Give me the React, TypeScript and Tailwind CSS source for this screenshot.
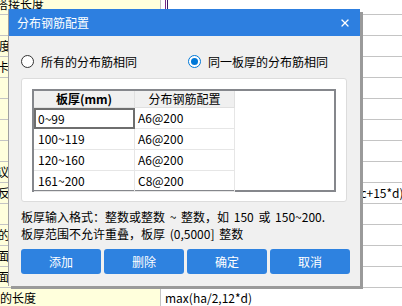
import { X } from "lucide-react"

const left = [
  { t: "搭接长度", ml: "-ml-[4px]" },
  { t: "", ml: "" },
  { t: "度量长", ml: "-ml-[1px]" },
  { t: "卡长度", ml: "-ml-[3px]" },
  { t: "", ml: "" },
  { t: "", ml: "" },
  { t: "", ml: "" },
  { t: "", ml: "" },
  { t: "议长度", ml: "-ml-[3px]" },
  { t: "反弯长", ml: "-ml-[2px]" },
  { t: "", ml: "" },
  { t: "的长度", ml: "-ml-[2px]" },
  { t: "面伸长", ml: "-ml-[3px]" },
  { t: "面伸长", ml: "-ml-[3px]" },
  { t: "的长度", ml: "" },
]

const right: Record<number, string> = {
  9: "max(0.6*la+ha-bhc,0.35*lab+ha-bhc+15*d)",
  14: "max(ha/2,12*d)",
}

const grid = [
  { h: "0~99", v: "A6@200" },
  { h: "100~119", v: "A6@200" },
  { h: "120~160", v: "A6@200" },
  { h: "161~200", v: "C8@200" },
]

const Radio = ({ on, label }: { on?: boolean; label: string }) => (
  <label className="flex items-center gap-[7px]">
    <span
      className={
        on
          ? "w-[13px] h-[13px] rounded-full border border-[#0078d7] bg-white flex items-center justify-center"
          : "w-[13px] h-[13px] rounded-full border border-[#333] bg-white"
      }
    >
      {on && <span className="w-[7px] h-[7px] rounded-full bg-[#0078d7]" />}
    </span>
    <span>{label}</span>
  </label>
)

export default function App() {
  return (
    <div className="relative w-[402px] h-[306px] overflow-hidden bg-white text-[12px] leading-none text-black font-[family-name:'Noto_Sans_CJK_SC',sans-serif]">
      {/* sheet behind the dialog */}
      <div className="-mt-[6px] flex flex-col">
        {left.map((r, i) => (
          <div key={i} className="flex h-[21px]">
            <div className="w-[161px] shrink-0 bg-[#ffffdc] border-b border-r border-[#c4c4c4] flex items-center overflow-hidden whitespace-nowrap">
              <span className={r.ml}>{r.t}</span>
            </div>
            <div className="relative flex-1 border-b border-[#c4c4c4] flex items-center pl-[4px] whitespace-nowrap overflow-hidden">
              {i === 0 && (
                <>
                  <span className="absolute left-[4px] top-0 bottom-0 w-px bg-[#7a2a8a]" />
                  <span className="absolute left-[6px] top-0 bottom-0 w-px bg-[#3a1a6a]" />
                </>
              )}
              {right[i]}
            </div>
          </div>
        ))}
      </div>

      {/* dialog */}
      <div className="absolute left-[8px] top-[9px] w-[352px] h-[277px] bg-[#f0f0f0] border-l border-[#a0a0a0] shadow-[3px_3px_0_0_#9a9a9a] flex flex-col">
        <div className="h-[27px] bg-[#2d7fe0] text-white flex items-center justify-between pl-[8px] pr-[9px]">
          <span>分布钢筋配置</span>
          <X size={12} strokeWidth={2.5} />
        </div>

        <div className="flex items-center pl-[12px] pt-[13px] h-[38px] gap-[51px]">
          <Radio label="所有的分布筋相同" />
          <Radio on label="同一板厚的分布筋相同" />
        </div>

        <div className="ml-[12px] mr-[13px] mt-[4px] h-[124px] bg-white border border-[#dcdcdc] rounded-[3px] p-[10px]">
          <div className="h-[103px] border-2 border-[#85878c] flex flex-col">
            <div className="flex h-[17px] shrink-0">
              <div className="w-[101px] bg-[#f0f0f0] border-r border-b border-[#e0e0e0] flex items-center justify-center font-bold">
                板厚(mm)
              </div>
              <div className="w-[100px] bg-[#f0f0f0] border-r border-b border-[#e0e0e0] flex items-center justify-center">
                分布钢筋配置
              </div>
            </div>
            {grid.map((g, i) => (
              <div key={i} className="flex h-[21px] shrink-0">
                <div
                  className={
                    i === 0
                      ? "w-[101px] border-2 border-[#6e6e6e] flex items-center pl-[2px]"
                      : "w-[101px] border-r border-b border-[#e6e6e6] flex items-center pl-[4px]"
                  }
                >
                  {g.h}
                </div>
                <div className="w-[100px] border-r border-b border-[#e6e6e6] flex items-center pl-[3px]">{g.v}</div>
              </div>
            ))}
          </div>
        </div>

        <div className="pl-[12px] pt-[8px] flex flex-col gap-[4px] leading-[13px] [word-spacing:2px]">
          <div>板厚输入格式：整数或整数 ~ 整数，如 150 或 150~200.</div>
          <div>板厚范围不允许重叠，板厚 (0,5000] 整数</div>
        </div>

        <div className="flex gap-[3px] pl-[12px] mt-[9px]">
          {["添加", "删除", "确定", "取消"].map((b) => (
            <button key={b} className="w-[80px] h-[25px] rounded-[3px] bg-[#2e82e0] text-white">
              {b}
            </button>
          ))}
        </div>
      </div>
    </div>
  )
}
